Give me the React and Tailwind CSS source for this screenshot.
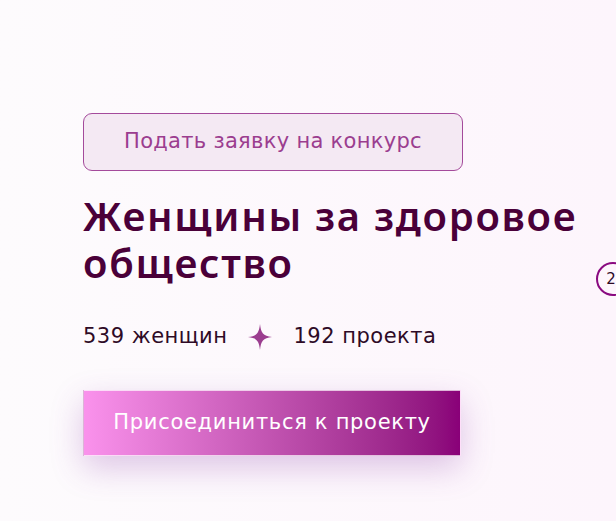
export default function App() {
  return (
    <div
      className="relative w-[616px] h-[521px] overflow-hidden bg-gradient-to-r from-[#fdfbfd] to-[#fdf5fc]"
      style={{ fontFamily: '"DejaVu Sans", "Noto Sans", sans-serif' }}
    >
      <div className="flex flex-col items-start pl-[83px] pt-[113px]">
        <button className="w-[380px] h-[58px] rounded-[9px] border border-[#a44a9b] bg-[#f4e9f3] text-[#9b3d8f] text-[21px] tracking-[0.3px]">
          Подать заявку на конкурс
        </button>
        <h1
          className="mt-[21px] text-[40px] leading-[47px] font-semibold tracking-[1.7px] text-[#4a0039]"
          style={{ fontFamily: '"Noto Sans", sans-serif' }}
        >
          Женщины за здоровое<br />общество
        </h1>
        <div className="mt-[35px] flex items-center text-[21px] tracking-[0.5px] text-[#2e0a26]">
          <span>539 женщин</span>
          <svg className="mx-[21px]" width="24" height="26" viewBox="0 0 24 26">
            <path d="M12 0 C13 9 15 12 24 13 C15 14 13 17 12 26 C11 17 9 14 0 13 C9 12 11 9 12 0 Z" fill="#9b3d8f" />
          </svg>
          <span>192 проекта</span>
        </div>
        <button className="mt-[37px] w-[378px] h-[66px] border border-white/70 bg-gradient-to-r from-[#fa92ec] to-[#890078] text-white text-[21px] tracking-[0.7px] shadow-[0_12px_32px_rgba(140,60,170,0.28)]">
          Присоединиться к проекту
        </button>
      </div>
      <div className="absolute left-[596px] top-[262px] w-[34px] h-[34px] rounded-full border-2 border-[#8a0a80] flex items-center justify-center text-[15px] text-[#2e0a26] pr-[18px]">
        <span className="ml-[14px]">2</span>
      </div>
    </div>
  );
}
